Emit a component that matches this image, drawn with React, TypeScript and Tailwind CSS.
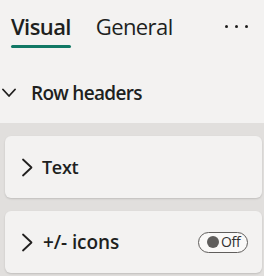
import React from "react";

const font = { fontFamily: '"Open Sans", "Noto Sans", sans-serif' };

function ChevronRight() {
  return (
    <svg width="13" height="19" viewBox="0 0 13 19" fill="none">
      <path d="M2 1.5 L10.5 9.5 L2 17.5" stroke="#201f1e" strokeWidth="1.8" strokeLinecap="round" strokeLinejoin="round" />
    </svg>
  );
}

function ChevronDown() {
  return (
    <svg width="14" height="10" viewBox="0 0 14 10" fill="none">
      <path d="M1 1.5 L7 8 L13 1.5" stroke="#201f1e" strokeWidth="1.8" strokeLinecap="round" strokeLinejoin="round" />
    </svg>
  );
}

export default function App() {
  return (
    <div className="w-[264px] h-[276px] bg-[#e1dfdd] flex flex-col overflow-hidden" style={font}>
      <div className="h-[123px] bg-[#f3f2f1] flex flex-col">
        <div className="flex items-start h-[49px] pl-[11px] pr-[16px]">
          <div className="flex flex-col">
            <span className="text-[22px] leading-[30px] font-semibold text-[#201f1e] mt-[11px] tracking-[-0.6px]">Visual</span>
            <div className="h-[3px] bg-[#117865] rounded-sm mt-[4px]" />
          </div>
          <span className="text-[22px] leading-[30px] text-[#201f1e] mt-[11px] ml-[25px] tracking-[-0.6px]">General</span>
          <div className="ml-auto mt-[25px] flex gap-[7px]">
            <div className="w-[3px] h-[3px] rounded-full bg-[#201f1e]" />
            <div className="w-[3px] h-[3px] rounded-full bg-[#201f1e]" />
            <div className="w-[3px] h-[3px] rounded-full bg-[#201f1e]" />
          </div>
        </div>
        <div className="flex items-center pl-[2px] mt-[31px]">
          <ChevronDown />
          <span className="ml-[15px] text-[19px] leading-[26px] font-semibold text-[#201f1e] tracking-[-0.7px]">Row headers</span>
        </div>
      </div>
      <div className="flex flex-col gap-[13px] pt-[13px] pl-[5px] pr-[2px]">
        <div className="h-[62px] bg-[#f3f2f1] rounded-[6px] shadow-[0_1px_2px_rgba(0,0,0,0.15)] flex items-center pl-[16px]">
          <ChevronRight />
          <span className="ml-[8px] text-[18px] font-semibold text-[#201f1e] tracking-[-0.3px]">Text</span>
        </div>
        <div className="h-[62px] bg-[#f3f2f1] rounded-[6px] shadow-[0_1px_2px_rgba(0,0,0,0.15)] flex items-center pl-[16px] pr-[14px]">
          <ChevronRight />
          <span className="ml-[9px] text-[19px] font-semibold text-[#201f1e] tracking-[-0.1px]">+/- icons</span>
          <div className="ml-auto w-[50px] h-[21px] rounded-full border border-[#605e5c] bg-[#faf9f8] flex items-center pl-[8px]">
            <div className="w-[12px] h-[12px] rounded-full bg-[#605e5c]" />
            <span className="ml-[2px] text-[14px] leading-none text-[#323130] tracking-[-0.3px]">Off</span>
          </div>
        </div>
      </div>
    </div>
  );
}
